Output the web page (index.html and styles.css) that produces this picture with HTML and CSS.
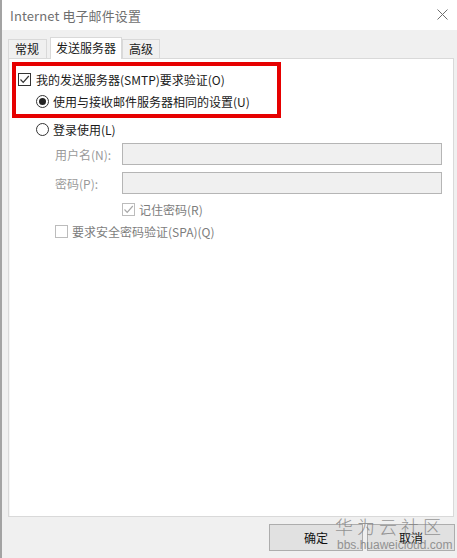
FILE: index.html
```html
<!DOCTYPE html>
<html lang="zh-CN">
<head>
<meta charset="utf-8">
<title>Internet 电子邮件设置</title>
<link rel="stylesheet" href="styles.css">
</head>
<body>
<div class="window">
  <div class="titlebar">
    <span class="title">Internet 电子邮件设置</span>
    <svg class="close" width="11" height="11" viewBox="0 0 11 11"><path d="M0.5 0.5L10.5 10.5M10.5 0.5L0.5 10.5" stroke="#6e6e6e" stroke-width="1" fill="none"/></svg>
  </div>
  <div class="tabs">
    <div class="tab">常规</div>
    <div class="tab active">发送服务器</div>
    <div class="tab">高级</div>
  </div>
  <div class="panel">
    <div class="redbox">
      <div class="row row1">
        <span class="check checked"><svg width="11" height="11" viewBox="0 0 11 11"><path d="M1.5 5.5L4.2 8.3L9.8 2" stroke="#333" stroke-width="1.2" fill="none"/></svg></span>
        <span class="label">我的发送服务器(SMTP)要求验证(O)</span>
      </div>
      <div class="row row2 indent">
        <span class="radio on"><span class="dot"></span></span>
        <span class="label">使用与接收邮件服务器相同的设置(U)</span>
      </div>
    </div>
    <div class="row row3 indent">
      <span class="radio"></span>
      <span class="label">登录使用(L)</span>
    </div>
    <div class="field user">
      <span class="flabel">用户名(N):</span>
      <span class="input"></span>
    </div>
    <div class="field pass">
      <span class="flabel">密码(P):</span>
      <span class="input"></span>
    </div>
    <div class="row row4">
      <span class="check disabled"><svg width="11" height="11" viewBox="0 0 11 11"><path d="M1.5 5.5L4.2 8.3L9.8 2" stroke="#a8a8a8" stroke-width="1.2" fill="none"/></svg></span>
      <span class="label dim">记住密码(R)</span>
    </div>
    <div class="row row5">
      <span class="check disabled"></span>
      <span class="label dim">要求安全密码验证(SPA)(Q)</span>
    </div>
  </div>
  <div class="footer">
    <div class="btn">确定</div>
    <div class="btn">取消</div>
  </div>
  <div class="watermark">
    <div class="wm-cn">华为云社区</div>
    <div class="wm-en">bbs.huaweicloud.com</div>
  </div>
</div>
</body>
</html>
```
FILE: styles.css
```css
html, body {
  margin: 0;
  padding: 0;
}
body {
  width: 457px;
  height: 558px;
  overflow: hidden;
  background: #f0f0f0;
  font-family: "Noto Sans CJK SC", "Noto Sans", sans-serif;
  font-size: 12px;
  color: #1a1a1a;
}
.window {
  position: relative;
  height: 558px;
  border-left: 2px solid #a3a3a3;
  box-sizing: border-box;
}
.titlebar {
  height: 30px;
  background: #ffffff;
  display: flex;
  align-items: center;
  justify-content: space-between;
  padding: 0 9px 0 8px;
}
.title {
  font-size: 13px;
  color: #6f6f6f;
  letter-spacing: 0.1px;
}
.close {
  display: block;
  margin-top: -2px;
}
.tabs {
  display: flex;
  align-items: flex-end;
  height: 20px;
  margin-top: 8px;
  padding-left: 6px;
}
.tab {
  height: 18px;
  line-height: 17px;
  padding: 0 6px;
  border: 1px solid #d9d9d9;
  border-bottom: none;
  background: #f0f0f0;
  font-size: 12px;
  color: #1a1a1a;
}
.tab:first-child {
  padding: 0 7px 0 6px;
  margin-right: 3px;
}
.tab.active {
  height: 21px;
  line-height: 19px;
  background: #ffffff;
  padding: 0 5px;
  position: relative;
  z-index: 1;
  margin-bottom: -1px;
}
.panel {
  margin-left: 6px;
  width: 444px;
  height: 457px;
  background: #ffffff;
  border: 1px solid #d9d9d9;
  box-shadow: inset 1px 0 0 #f4f4f4;
}
.redbox {
  margin: 3px 0 0 3px;
  width: 261px;
  height: 46px;
  border: 4px solid #e60000;
  padding-top: 2px;
  box-sizing: content-box;
}
.row {
  display: flex;
  align-items: center;
  height: 22px;
}
.row1 {
  padding-left: 2px;
}
.row2 {
  height: 23px;
  padding-left: 20px;
}
.row3 {
  height: 22px;
  padding-left: 27px;
}
.check {
  width: 11px;
  height: 11px;
  border: 1px solid #333333;
  background: #ffffff;
  display: inline-flex;
  margin-right: 5px;
}
.check.disabled {
  border-color: #bcbcbc;
}
.radio {
  width: 11px;
  height: 11px;
  border: 1px solid #333333;
  border-radius: 50%;
  background: #ffffff;
  display: inline-flex;
  align-items: center;
  justify-content: center;
  margin-right: 4px;
}
.radio .dot {
  width: 7px;
  height: 7px;
  border-radius: 50%;
  background: #222222;
}
.label {
  font-size: 12px;
  color: #1a1a1a;
  white-space: nowrap;
}
.label.dim {
  color: #7d7d7d;
}
.field {
  display: flex;
  align-items: center;
  height: 22px;
  padding-left: 46px;
}
.field.user {
  margin-top: 3px;
}
.field.pass {
  margin-top: 7px;
}
.flabel {
  width: 67px;
  color: #9a9a9a;
  font-size: 12px;
}
.input {
  width: 318px;
  height: 20px;
  background: #f0f0f0;
  border: 1px solid #b5b5b5;
}
.row4 {
  margin-top: 4px;
  padding-left: 113px;
}
.row5 {
  padding-left: 46px;
}
.row4 .check, .row5 .check {
  margin-right: 4px;
}
.footer {
  display: flex;
  justify-content: flex-end;
  gap: 4px;
  margin-top: 7px;
  padding-right: 2px;
}
.btn {
  width: 92px;
  height: 25px;
  line-height: 25px;
  text-align: center;
  background: #e1e1e1;
  border: 1px solid #adadad;
  font-size: 12px;
  color: #111111;
}
.btn + .btn {
  width: 86px;
}
.watermark {
  position: absolute;
  left: 333px;
  top: 515px;
  color: #7e7e7e;
  opacity: 0.8;
  pointer-events: none;
  white-space: nowrap;
}
.wm-cn {
  font-size: 18px;
  line-height: 22px;
  letter-spacing: 4px;
  font-weight: 300;
}
.wm-en {
  font-family: "Liberation Sans", "DejaVu Sans", sans-serif;
  font-size: 12px;
  line-height: 14px;
  margin-top: 1px;
  padding-left: 2px;
}
```
